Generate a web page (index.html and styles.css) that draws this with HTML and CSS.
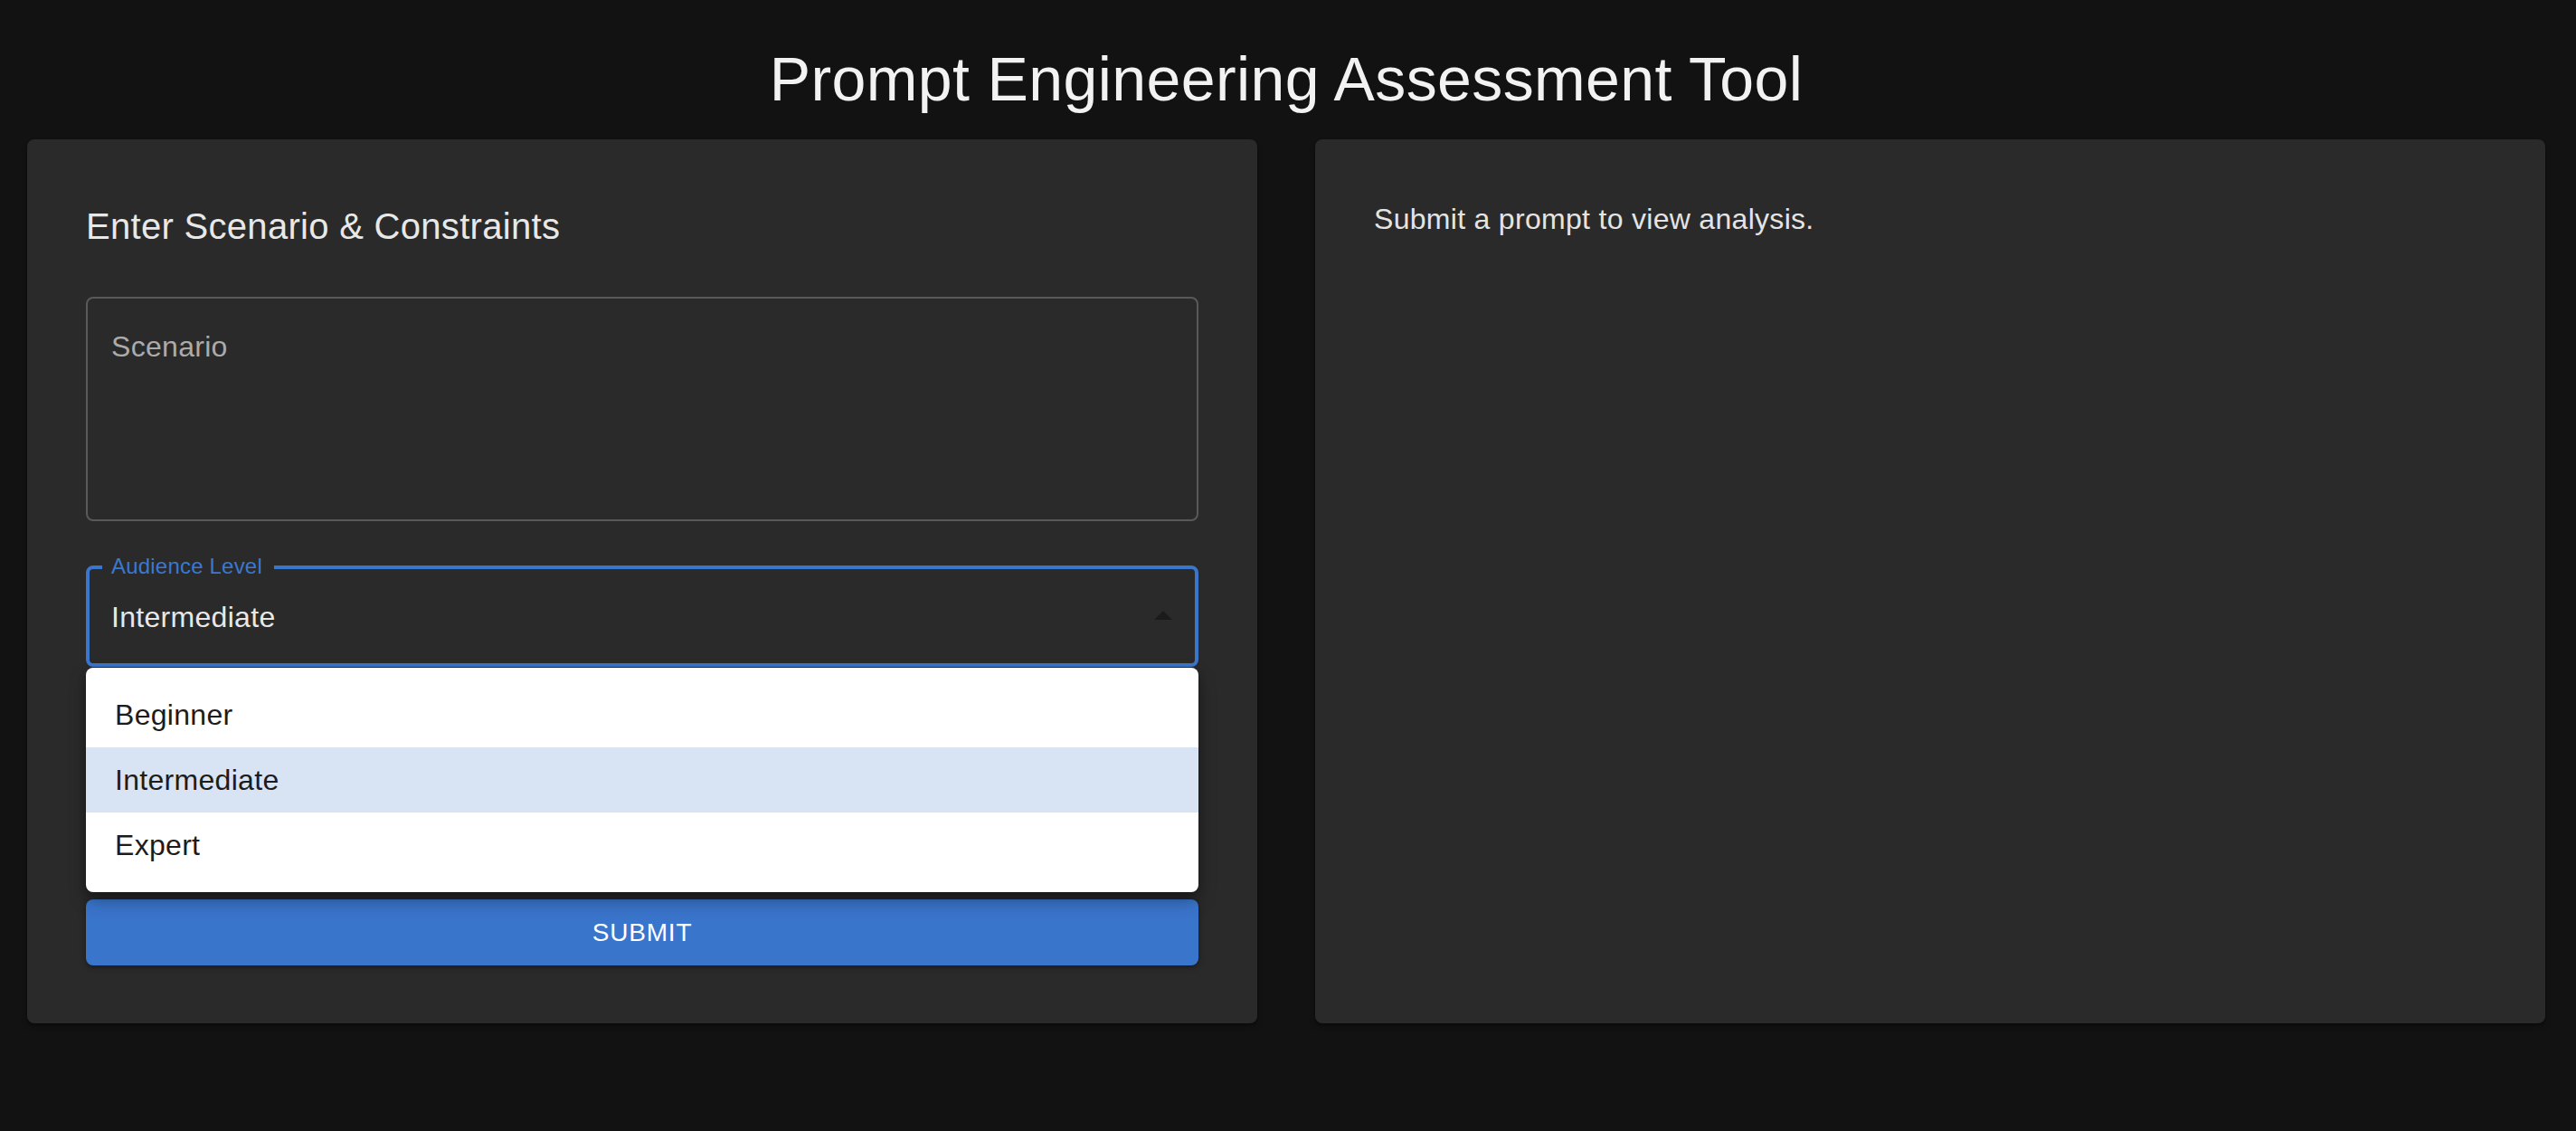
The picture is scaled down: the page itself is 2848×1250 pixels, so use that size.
FILE: index.html
```html
<!DOCTYPE html>
<html lang="en">
<head>
<meta charset="utf-8">
<title>Prompt Engineering Assessment Tool</title>
<link rel="stylesheet" href="styles.css">
</head>
<body>
<div class="page">
  <h1 class="title">Prompt Engineering Assessment Tool</h1>
  <div class="columns">
    <section class="card">
      <h2 class="card-heading">Enter Scenario &amp; Constraints</h2>
      <div class="form">
        <div class="textfield">
          <span class="placeholder">Scenario</span>
        </div>
        <div class="select-wrap">
          <div class="select">
            <span class="select-label">Audience Level</span>
            <span class="select-value">Intermediate</span>
            <svg class="select-arrow" width="20" height="10" viewBox="0 0 20 10"><polygon points="0,10 10,0 20,10" fill="#1b1b1b"/></svg>
          </div>
          <ul class="menu">
            <li class="menu-item">Beginner</li>
            <li class="menu-item selected">Intermediate</li>
            <li class="menu-item">Expert</li>
          </ul>
        </div>
        <div class="textfield hidden-field"></div>
        <button class="submit" type="button">Submit</button>
      </div>
    </section>
    <section class="card">
      <p class="empty-text">Submit a prompt to view analysis.</p>
    </section>
  </div>
</div>
</body>
</html>
```

FILE: styles.css
```css
* { box-sizing: border-box; }
html, body {
  margin: 0;
  padding: 0;
  background: #121212;
}
body {
  font-family: "Liberation Sans", Arial, Helvetica, sans-serif;
  color: #e8e8e8;
  width: 2848px;
  height: 1250px;
  overflow: hidden;
}
.page {
  padding: 0 34px 0 30px;
}
.title {
  margin: 47px 0 27px;
  font-size: 68px;
  line-height: 80px;
  font-weight: 400;
  letter-spacing: 0.4px;
  text-align: center;
  color: #f2f2f2;
}
.columns {
  display: grid;
  grid-template-columns: 1360px 1360px;
  column-gap: 64px;
}
.card {
  background: #2a2a2a;
  border-radius: 8px;
  padding: 64px 65px;
  box-shadow: 0 2px 2px rgba(0,0,0,0.25), 0 4px 6px rgba(0,0,0,0.2);
}
.card-heading {
  margin: 0 0 46px;
  font-size: 40px;
  line-height: 64px;
  font-weight: 400;
  letter-spacing: 0.3px;
  color: #e8e8e8;
}
.form {
  display: flex;
  flex-direction: column;
}
.textfield {
  height: 248px;
  border: 2px solid #595959;
  border-radius: 8px;
  padding: 29px 26px;
}
.placeholder {
  display: block;
  font-size: 32px;
  line-height: 48px;
  letter-spacing: 0.3px;
  color: #ababab;
}
.select-wrap {
  position: relative;
  margin-top: 49px;
}
.select {
  position: relative;
  height: 112px;
  border: 4px solid #3a76cc;
  border-radius: 8px;
  padding: 0 25px 0 24px;
  display: flex;
  align-items: center;
  justify-content: space-between;
}
.select-label {
  position: absolute;
  left: 14px;
  top: -18px;
  padding: 0 13px 0 10px;
  background: #2a2a2a;
  font-size: 24px;
  line-height: 30px;
  letter-spacing: 0.2px;
  color: #3a78d2;
}
.select-value {
  font-size: 32px;
  line-height: 48px;
  letter-spacing: 0.3px;
  color: #e8e8e8;
  margin-top: 2px;
}
.select-arrow {
  display: block;
  margin-top: -2px;
}
.menu {
  position: absolute;
  left: 0;
  right: 0;
  top: 113px;
  margin: 0;
  padding: 16px 0;
  list-style: none;
  background: #ffffff;
  border-radius: 8px;
  box-shadow: 0 10px 20px rgba(0,0,0,0.3), 0 4px 8px rgba(0,0,0,0.2);
  z-index: 5;
}
.menu-item {
  height: 72px;
  padding: 0 32px;
  display: flex;
  align-items: center;
  font-size: 32px;
  letter-spacing: 0.3px;
  color: #1c1c1c;
}
.menu-item.selected {
  background: #d8e3f4;
}
.hidden-field {
  height: 161px;
  margin-top: 48px;
}
.submit {
  margin-top: 48px;
  height: 73px;
  border: 0;
  border-radius: 8px;
  background: #3a75cc;
  color: #ffffff;
  font-family: "Liberation Sans", Arial, Helvetica, sans-serif;
  font-size: 28px;
  letter-spacing: 0.8px;
  text-transform: uppercase;
  box-shadow: 0 2px 4px rgba(0,0,0,0.3), 0 1px 8px rgba(0,0,0,0.15);
  cursor: pointer;
}
.empty-text {
  margin: 0;
  font-size: 32px;
  line-height: 48px;
  letter-spacing: 0.3px;
  color: #e4e4e4;
}
```
